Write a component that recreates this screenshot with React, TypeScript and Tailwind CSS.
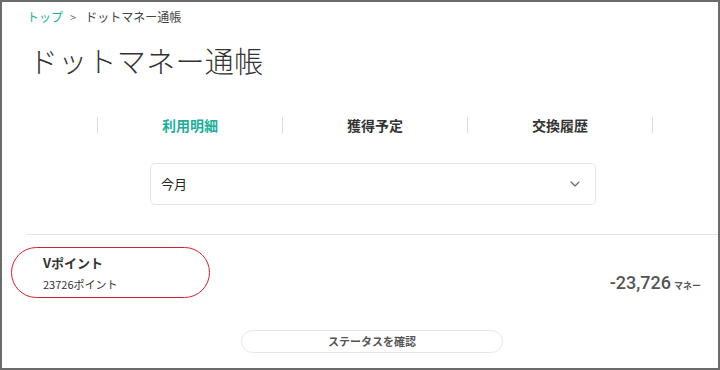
import { ChevronDown } from "lucide-react";

const tabs = [
  { label: "利用明細", active: true },
  { label: "獲得予定", active: false },
  { label: "交換履歴", active: false },
];

export default function App() {
  return (
    <div
      className="relative h-[370px] w-[720px] overflow-hidden border-2 border-[#6b6b6b] bg-white text-[#333]"
      style={{ fontFamily: '"Noto Sans CJK JP", "Noto Sans", sans-serif' }}
    >
      <nav className="ml-[25px] mt-[6px] flex items-center text-[12px] leading-[18px]">
        <span className="text-[#1fae9b]">トップ</span>
        <span className="ml-[7px] mr-[9px] text-[11px] text-[#777]">&gt;</span>
        <span className="text-[#444]">ドットマネー通帳</span>
      </nav>

      <h1 className="ml-[27px] mt-[14px] text-[29px] font-light leading-[40px] tracking-[0.01em] text-[#333]">
        ドットマネー通帳
      </h1>

      <div className="ml-[95px] mt-[37px] flex w-[556px]">
        {tabs.map((tab, i) => (
          <div
            key={tab.label}
            className={`flex h-[16px] flex-1 items-center justify-center border-l border-[#dcdcdc] ${
              i === tabs.length - 1 ? "border-r" : ""
            }`}
          >
            <span
              className={`text-[14px] font-bold leading-none ${
                tab.active ? "text-[#1fae9b]" : "text-[#333]"
              }`}
            >
              {tab.label}
            </span>
          </div>
        ))}
      </div>

      <div className="ml-[148px] mt-[30px] flex h-[42px] w-[446px] items-center justify-between rounded-[5px] border border-[#e6e6e6] pl-[10px] pr-[12px]">
        <span className="text-[13px] text-[#222]">今月</span>
        <ChevronDown size={16} strokeWidth={1.75} className="text-[#666]" />
      </div>

      <div className="ml-[25px] mt-[29px] h-px bg-[#e4e4e4]" />

      <div className="mt-[12px] flex items-end justify-between pr-[17px]">
        <div className="ml-[9px] flex h-[51px] w-[199px] flex-col justify-center rounded-full border-[1.5px] border-[#d2232a] pl-[31px]">
          <span className="text-[13px] font-bold leading-[18px] text-[#333]">Vポイント</span>
          <span className="mt-[5px] text-[11px] leading-[14px] text-[#333]">23726ポイント</span>
        </div>
        <div className="mb-[2px] flex items-baseline">
          <span
            className="text-[18px] font-medium text-[#555]"
            style={{ fontFamily: '"Roboto", "Noto Sans CJK JP", sans-serif' }}
          >
            -23,726
          </span>
          <span className="ml-[3px] text-[9px] font-bold text-[#555]">マネー</span>
        </div>
      </div>

      <div className="ml-[239px] mt-[32px] flex">
        <button className="flex h-[23px] w-[262px] items-center justify-center rounded-full border border-[#e6e6e6] text-[11px] font-bold text-[#555]">
          ステータスを確認
        </button>
      </div>
    </div>
  );
}
